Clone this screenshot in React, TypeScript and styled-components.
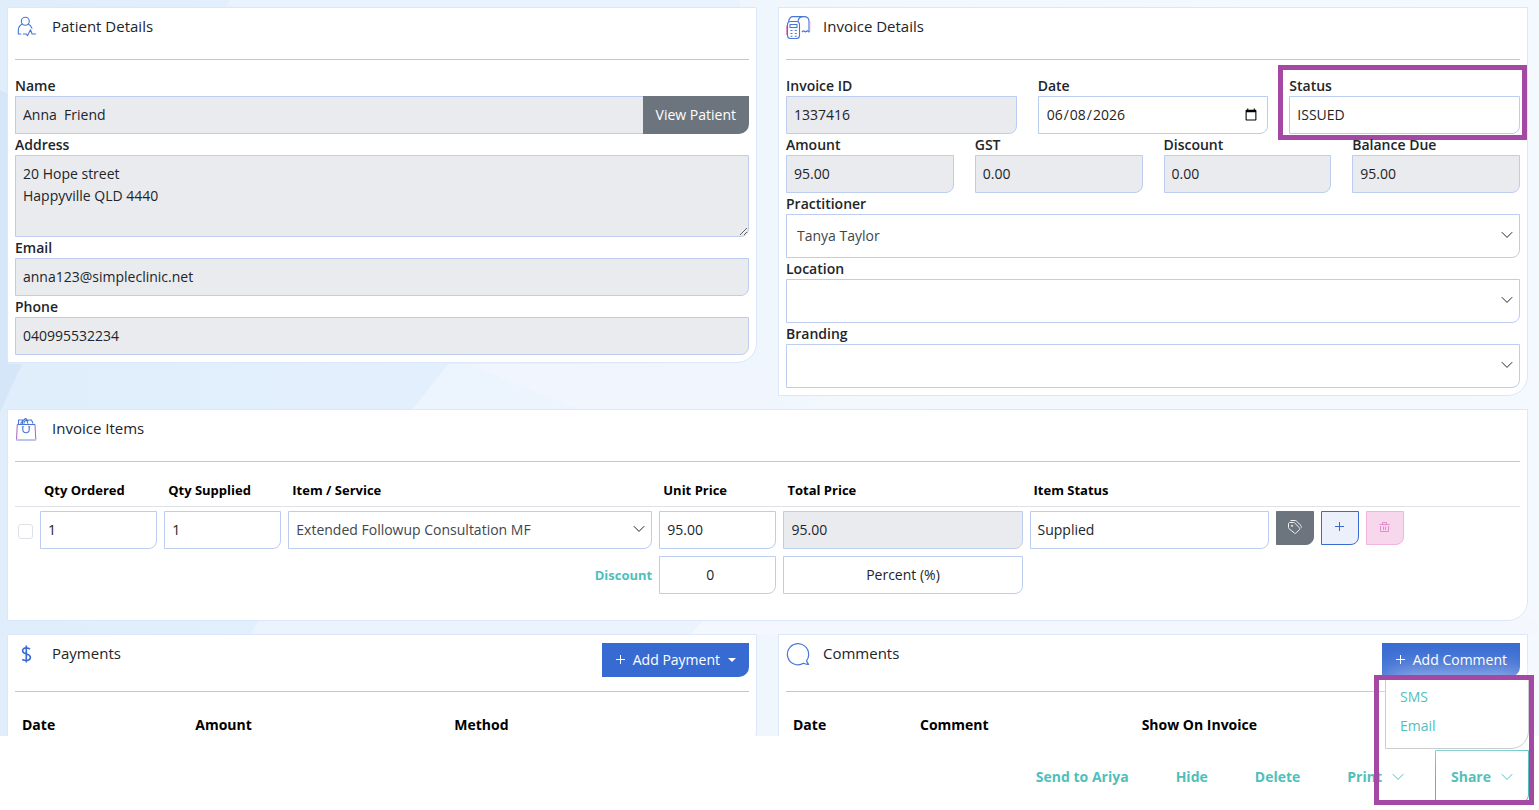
import React, { useId } from "react";
import styled, { createGlobalStyle, css } from "styled-components";

const c = {
  blue: "#386bd2",
  teal: "#50bfbb",
  text: "#212529",
  field: "#bccdf0",
  muted: "#eaebee",
  gray: "#6c757e",
  purple: "#a349a4",
};

const GlobalStyle = createGlobalStyle`
  *, *::before, *::after { box-sizing: border-box; }
  body { margin: 0; }
  body, input, select, textarea, button {
    font-family: "Open Sans", "Noto Sans", sans-serif;
    font-size: 14px;
    line-height: 22px;
    color: ${c.text};
  }
`;

const Shell = styled.div`
  height: 100vh;
  display: flex;
  flex-direction: column;
  background: #fff;
`;

const Scroller = styled.main`
  position: relative;
  flex: 1;
  min-height: 0;
  overflow: auto;
  scrollbar-width: none;
  background: linear-gradient(90deg, #e0eefc 0%, #e3effc 30%, #f3f8fe 55%, #f4f9ff 100%);
`;

const Backdrop = styled.svg`
  position: absolute;
  inset: 0;
  width: 100%;
  height: 100%;
`;

const Content = styled.div`
  position: relative;
  display: grid;
  grid-template-columns: 1fr 1fr;
  gap: 13px 21px;
  padding: 7px 11px 7px 7px;
  align-items: start;
`;

const Card = styled.section<{ $wide?: boolean }>`
  background: #fff;
  border: 1px solid #dce7f9;
  border-bottom-right-radius: 20px;
  padding: 7px 7px ${(p) => (p.$wide ? 23 : 7)}px;
  ${(p) => p.$wide && "grid-column: 1 / -1;"}
`;

const CardHead = styled.header`
  display: flex;
  align-items: flex-start;
  padding: 1px 0 14px;
  margin-bottom: 15px;
  border-bottom: 1px solid #c5c6c8;
`;

const HeadIcon = styled.span`
  width: 37px;
  height: 29px;
  flex: none;
  svg { display: block; }
`;

const Title = styled.h2`
  flex: 1;
  margin: 0;
  font-size: 15px;
  line-height: 20px;
  font-weight: 400;
`;

const Grid = styled.div<{ $cols: number }>`
  display: grid;
  grid-template-columns: repeat(${(p) => p.$cols}, minmax(0, 1fr));
  column-gap: 21px;
`;

const FieldBox = styled.div`
  position: relative;
  display: flex;
  flex-direction: column;
`;

const Label = styled.label`
  font-weight: 600;
  line-height: 21px;
`;

const control = css`
  display: block;
  width: 100%;
  min-width: 0;
  margin: 0;
  border: 1px solid ${c.field};
  border-radius: 0 0 8px 0;
  background: #fff;
  outline: none;
`;

const Input = styled.input<{ $center?: boolean }>`
  ${control}
  height: 38px;
  padding: 0 7px 2px;
  text-align: ${(p) => (p.$center ? "center" : "left")};
  &:read-only:not([type="date"]) { background: ${c.muted}; }
  &[type="date"] { padding-bottom: 0; }
`;

const TextArea = styled.textarea`
  ${control}
  height: 82px;
  padding: 7px;
  background: ${c.muted};
  resize: vertical;
`;

const SelectWrap = styled.div`
  position: relative;
  svg {
    position: absolute;
    right: 7px;
    top: 50%;
    margin-top: -7px;
    pointer-events: none;
  }
`;

const Select = styled.select<{ $tall?: boolean; $center?: boolean }>`
  ${control}
  appearance: none;
  height: ${(p) => (p.$tall ? 44 : 38)}px;
  padding: 0 ${(p) => (p.$tall ? 10 : 7)}px;
  color: ${(p) => (p.$center ? c.text : "#41464b")};
  text-align-last: ${(p) => (p.$center ? "center" : "left")};
`;

const InputGroup = styled.div`
  display: flex;
  ${Input} { flex: 1; border-radius: 0; border-right: 0; }
`;

const Button = styled.button<{ $tone: "gray" | "blue" }>`
  display: flex;
  align-items: center;
  border: 0;
  border-radius: 0 0 10px 0;
  padding: 0 13px;
  height: ${(p) => (p.$tone === "gray" ? 38 : 34)}px;
  background: ${(p) => (p.$tone === "gray" ? c.gray : c.blue)};
  color: #fff;
  white-space: nowrap;
  svg { margin-right: 6px; }
`;

const Caret = styled.span`
  margin-left: 8px;
  border: 4px solid transparent;
  border-top-color: #fff;
  border-bottom: 0;
`;

const Table = styled.table`
  width: 100%;
  border-collapse: collapse;
  table-layout: fixed;
  th { text-align: left; color: #000; font-weight: 700; }
`;

const ItemsTable = styled(Table)`
  th {
    font-size: 13px;
    line-height: 20px;
    padding: 3px 4px 6px;
    border-bottom: 1px solid #dee2e6;
  }
  td { padding: 4px 7px 3px 0; vertical-align: middle; }
`;

const ListTable = styled(Table)`
  th { padding: 7px; }
`;

const CheckBox = styled.input`
  appearance: none;
  display: block;
  width: 15px;
  height: 15px;
  margin: 2px 0 0 3px;
  border: 1px solid #dee2e6;
  border-radius: 3px;
  background: #fff;
`;

const DiscountLabel = styled.label`
  display: block;
  text-align: right;
  font-size: 13px;
  font-weight: 700;
  color: ${c.teal};
`;

const Actions = styled.div`
  display: flex;
  gap: 7px;
  height: 38px;
`;

const tones = {
  gray: ["#f1f2f3", c.gray, c.gray],
  blue: [c.blue, "#ebf0fa", c.blue],
  pink: ["#e78cc9", "#f6d7ec", "#efb5de"],
};

const IconButton = styled.button<{ $tone: keyof typeof tones }>`
  display: flex;
  align-items: center;
  justify-content: center;
  width: 38px;
  height: 34px;
  padding: 0 0 2px;
  border: 1px solid ${(p) => tones[p.$tone][2]};
  border-radius: 0 0 8px 0;
  color: ${(p) => tones[p.$tone][0]};
  background: ${(p) => tones[p.$tone][1]};
`;

const Footer = styled.footer`
  position: relative;
  display: flex;
  align-items: flex-start;
  justify-content: flex-end;
  gap: 15px;
  height: 74px;
  padding: 14px 10px 0;
  background: #fff;
`;

const FooterButton = styled.button<{ $open?: boolean }>`
  display: flex;
  align-items: center;
  gap: 10px;
  height: 53px;
  padding: 0 15px;
  border: 1px solid ${(p) => (p.$open ? c.teal : "transparent")};
  border-radius: 0 0 8px 0;
  background: none;
  color: ${c.teal};
  font-weight: 700;
`;

const ShareWrap = styled.div`
  position: relative;
`;

const Menu = styled.ul`
  position: absolute;
  right: 0;
  bottom: 54px;
  width: 144px;
  margin: 0;
  padding: 6px 0 8px;
  list-style: none;
  background: #fff;
  border: 1px solid #cccdce;
  border-bottom-right-radius: 18px;
  box-shadow: 0 0 32px rgba(255, 255, 255, 0.7);
  a {
    display: block;
    padding: 0 14px;
    line-height: 29px;
    color: ${c.teal};
    text-decoration: none;
  }
`;

const Highlight = styled.div<{ $area: "status" | "share" }>`
  position: absolute;
  border: 5px solid ${c.purple};
  pointer-events: none;
  inset: ${(p) => (p.$area === "status" ? "-10px -7px -6px -11px" : "-75px -5px -2px -61px")};
`;

const Chevron = () => (
  <svg width="12" height="12" viewBox="0 0 12 12" fill="none" stroke="currentColor" aria-hidden="true">
    <path d="M0.8 3.2 6 8.4 11.2 3.2" />
  </svg>
);

const Plus = () => (
  <svg width="12" height="12" viewBox="0 0 12 12" fill="none" stroke="currentColor" aria-hidden="true">
    <path d="M1 5.500h9M5.500 1v9" />
  </svg>
);

const PatientIcon = () => (
  <svg width="24" height="24" viewBox="0 0 24 24" fill="none" stroke="#4776d6" strokeWidth="1.1" strokeLinecap="round" strokeLinejoin="round">
    <circle cx="10.3" cy="5.2" r="4" />
    <path d="M7.3 8C4.8 9.3 3.3 11.700 3.3 14.500V18h2.500M13.300 8c1.900 1 3.100 2.500 3.700 4.300M8.300 18h3l1.200 1.700 3-6 1.600 4.300H20.500" />
  </svg>
);

const InvoiceIcon = () => (
  <svg width="26" height="26" viewBox="0 0 26 26" fill="none" stroke="#4776d6" strokeWidth="1.1" strokeLinejoin="round">
    <path d="M0.600 19V9.500" stroke="#e58fcb" />
    <rect x="1.500" y="5.500" width="12" height="17" rx="3" />
    <path d="M2.500 5.800C3 2.500 4.300 .6 7 .6h11c3.200 0 5 2.200 5 5V16l-1.800-1.300-1.800 1.300-1.800-1.300-1.800 1.300" />
    <path d="M23.700 5v11" stroke="#e58fcb" />
    <path d="M12 6C12.200 2.800 14.300 .6 17 .6M4 8.500h7v3H4z" />
    <path d="M4.500 14.500h2M8.800 14.500h2M4.500 17.500h2M8.800 17.500h2M4.500 20.200h2M8.800 20.200h2" />
  </svg>
);

const BagIcon = () => (
  <svg width="24" height="26" viewBox="0 0 24 26" fill="none" stroke="#4776d6" strokeWidth="1.100" strokeLinejoin="round">
    <path d="M2.300 6.500 1.500 22M20 6.500 20.800 22" stroke="#b06fc8" />
    <path d="M2.300 6.500H20" />
    <path d="M1.300 22h19.700" stroke="#bcc6ea" strokeWidth="2" />
    <path d="M3.500 6V2h4V6M7.500 3l3-2.500 3 2.500M9 5.500c0-2 1.300-3.300 3-3.300M13.500 2h3l1.500 3.500M11 .8l2 4.800M5.500 5.500l3-3" />
    <path d="M7.800 9v2.500c0 4.300 6.400 4.300 6.400 0V9M6.800 8.700h2M13.200 8.700h2" />
  </svg>
);

const DollarIcon = () => (
  <svg width="24" height="24" viewBox="0 0 24 24" fill="none" stroke="#386bd2" strokeWidth="1.600">
    <path d="M15 6.200C14 5.300 12.800 4.900 11.300 4.900 9 4.900 7.600 6 7.600 7.700c0 4.300 7.800 2.300 7.800 6.500 0 1.900-1.600 3.200-4.200 3.200-1.700 0-3.100-.4-4-1.100M11.300 2.500v17" />
  </svg>
);

const CommentIcon = () => (
  <svg width="26" height="26" viewBox="0 0 26 26" fill="none" stroke="#4776d6" strokeWidth="1.200" strokeLinejoin="round">
    <path d="M20.500 17.800C22 16 22.800 13.800 22.600 11.300A10.600 10.600 0 1 0 17.500 20.300c1.500.8 3.300 1.100 5.100 1-.9-1-1.600-2.200-2.100-3.500z" />
  </svg>
);

const TagIcon = () => (
  <svg width="16" height="16" viewBox="0 0 16 16" fill="none" stroke="currentColor" strokeLinejoin="round">
    <path d="M1.500 5c0-.9.500-1.500 1.400-1.500h3.600c.5 0 .9.200 1.200.5l4.600 4.600c.7.700.7 1.500 0 2.200l-3 3c-.7.700-1.500.7-2.200 0L2 9.700c-.3-.3-.5-.7-.5-1.200zM3.500 1.500h4.700c.5 0 .9.200 1.200.5L14 6.600c.6.600.6 1.400 0 2.200" />
    <circle cx="5" cy="6.800" r=".7" />
  </svg>
);

const TrashIcon = () => (
  <svg width="12" height="12" viewBox="0 0 12 12" fill="none" stroke="currentColor">
    <path d="M.500 3.500h10M3.500 3.500v-2h4v2M1.500 5v5.500h8V5M4.500 5.500v3.500M6.500 5.500v3.500" />
  </svg>
);

type FieldProps = { label: string; value?: string; type?: string; readOnly?: boolean; children?: React.ReactNode };

function Field({ label, value, type, readOnly, children }: FieldProps) {
  const id = useId();
  return (
    <FieldBox>
      <Label htmlFor={id}>{label}</Label>
      <Input id={id} type={type} defaultValue={value} readOnly={readOnly} />
      {children}
    </FieldBox>
  );
}

function SelectField({ label, value }: { label: string; value: string }) {
  const id = useId();
  return (
    <FieldBox>
      <Label htmlFor={id}>{label}</Label>
      <SelectWrap>
        <Select id={id} $tall>
          <option>{value}</option>
        </Select>
        <Chevron />
      </SelectWrap>
    </FieldBox>
  );
}

function Head({ icon, title, children }: { icon: React.ReactNode; title: string; children?: React.ReactNode }) {
  return (
    <CardHead>
      <HeadIcon>{icon}</HeadIcon>
      <Title>{title}</Title>
      {children}
    </CardHead>
  );
}

export default function App() {
  return (
    <Shell>
      <GlobalStyle />
      <Scroller>
        <Backdrop viewBox="0 0 1539 736" preserveAspectRatio="none" aria-hidden="true">
          <path d="M0 90 8 94V364H22L0 412z" fill="#d5e6f9" />
          <path d="M448 364 412 410H780V364z" fill="#ecf4fd" />
          <path d="M468 364 580 410H780V364z" fill="#f1f6fe" />
          <path d="M230 0 225 8H740V0z" fill="#e9f3fe" />
          <path d="M260 619 250 635H690L705 619z" fill="#ebf4fd" />
          <path d="M705 619 690 635H1539V619z" fill="#f4f8fe" />
        </Backdrop>
        <Content>
          <Card>
            <Head icon={<PatientIcon />} title="Patient Details" />
            <FieldBox>
              <Label htmlFor="name">Name</Label>
              <InputGroup>
                <Input id="name" readOnly defaultValue={"Anna\u00a0 Friend"} />
                <Button type="button" $tone="gray">View Patient</Button>
              </InputGroup>
            </FieldBox>
            <FieldBox>
              <Label htmlFor="address">Address</Label>
              <TextArea id="address" readOnly defaultValue={"20 Hope street\nHappyville QLD 4440"} />
            </FieldBox>
            <Field label="Email" value="anna123@simpleclinic.net" readOnly />
            <Field label="Phone" value="040995532234" readOnly />
          </Card>

          <Card>
            <Head icon={<InvoiceIcon />} title="Invoice Details" />
            <Grid $cols={3}>
              <Field label="Invoice ID" value="1337416" readOnly />
              <Field label="Date" type="date" value="2026-06-08" />
              <Field label="Status" value="ISSUED">
                <Highlight $area="status" />
              </Field>
            </Grid>
            <Grid $cols={4}>
              <Field label="Amount" value="95.00" readOnly />
              <Field label="GST" value="0.00" readOnly />
              <Field label="Discount" value="0.00" readOnly />
              <Field label="Balance Due" value="95.00" readOnly />
            </Grid>
            <SelectField label="Practitioner" value="Tanya Taylor" />
            <SelectField label="Location" value="" />
            <SelectField label="Branding" value="" />
          </Card>

          <Card $wide>
            <Head icon={<BagIcon />} title="Invoice Items" />
            <ItemsTable>
              <colgroup>
                <col style={{ width: 25 }} />
                <col style={{ width: "8.25%" }} />
                <col style={{ width: "8.25%" }} />
                <col style={{ width: "24.65%" }} />
                <col style={{ width: "8.25%" }} />
                <col style={{ width: "16.35%" }} />
                <col style={{ width: "16.35%" }} />
                <col />
              </colgroup>
              <thead>
                <tr>
                  <th />
                  <th>Qty Ordered</th>
                  <th>Qty Supplied</th>
                  <th>Item / Service</th>
                  <th>Unit Price</th>
                  <th>Total Price</th>
                  <th>Item Status</th>
                  <th />
                </tr>
              </thead>
              <tbody>
                <tr>
                  <td><CheckBox type="checkbox" aria-label="Select item" /></td>
                  <td><Input aria-label="Qty Ordered" defaultValue="1" /></td>
                  <td><Input aria-label="Qty Supplied" defaultValue="1" /></td>
                  <td>
                    <SelectWrap>
                      <Select aria-label="Item / Service">
                        <option>Extended Followup Consultation MF</option>
                      </Select>
                      <Chevron />
                    </SelectWrap>
                  </td>
                  <td><Input aria-label="Unit Price" defaultValue="95.00" /></td>
                  <td><Input aria-label="Total Price" readOnly defaultValue="95.00" /></td>
                  <td><Input aria-label="Item Status" defaultValue="Supplied" /></td>
                  <td>
                    <Actions>
                      <IconButton type="button" $tone="gray" aria-label="Tag"><TagIcon /></IconButton>
                      <IconButton type="button" $tone="blue" aria-label="Add"><Plus /></IconButton>
                      <IconButton type="button" $tone="pink" aria-label="Remove"><TrashIcon /></IconButton>
                    </Actions>
                  </td>
                </tr>
                <tr>
                  <td colSpan={3} />
                  <td><DiscountLabel htmlFor="discount">Discount</DiscountLabel></td>
                  <td><Input id="discount" type="number" $center defaultValue="0" /></td>
                  <td>
                    <Select $center aria-label="Discount type">
                      <option>Percent (%)</option>
                    </Select>
                  </td>
                  <td colSpan={2} />
                </tr>
              </tbody>
            </ItemsTable>
          </Card>

          <Card>
            <Head icon={<DollarIcon />} title="Payments">
              <Button type="button" $tone="blue"><Plus />Add Payment<Caret /></Button>
            </Head>
            <ListTable>
              <colgroup>
                <col style={{ width: "23.6%" }} />
                <col style={{ width: "35.3%" }} />
                <col />
              </colgroup>
              <thead>
                <tr><th>Date</th><th>Amount</th><th>Method</th></tr>
              </thead>
            </ListTable>
          </Card>

          <Card>
            <Head icon={<CommentIcon />} title="Comments">
              <Button type="button" $tone="blue"><Plus />Add Comment</Button>
            </Head>
            <ListTable>
              <colgroup>
                <col style={{ width: "17.3%" }} />
                <col style={{ width: "30.2%" }} />
                <col />
              </colgroup>
              <thead>
                <tr><th>Date</th><th>Comment</th><th>Show On Invoice</th></tr>
              </thead>
            </ListTable>
          </Card>
        </Content>
      </Scroller>

      <Footer>
        <FooterButton type="button">Send to Ariya</FooterButton>
        <FooterButton type="button">Hide</FooterButton>
        <FooterButton type="button">Delete</FooterButton>
        <FooterButton type="button">Print<Chevron /></FooterButton>
        <ShareWrap>
          <FooterButton type="button" $open aria-expanded="true">Share<Chevron /></FooterButton>
          <Menu>
            <li><a href="#sms">SMS</a></li>
            <li><a href="#email">Email</a></li>
          </Menu>
          <Highlight $area="share" />
        </ShareWrap>
      </Footer>
    </Shell>
  );
}
